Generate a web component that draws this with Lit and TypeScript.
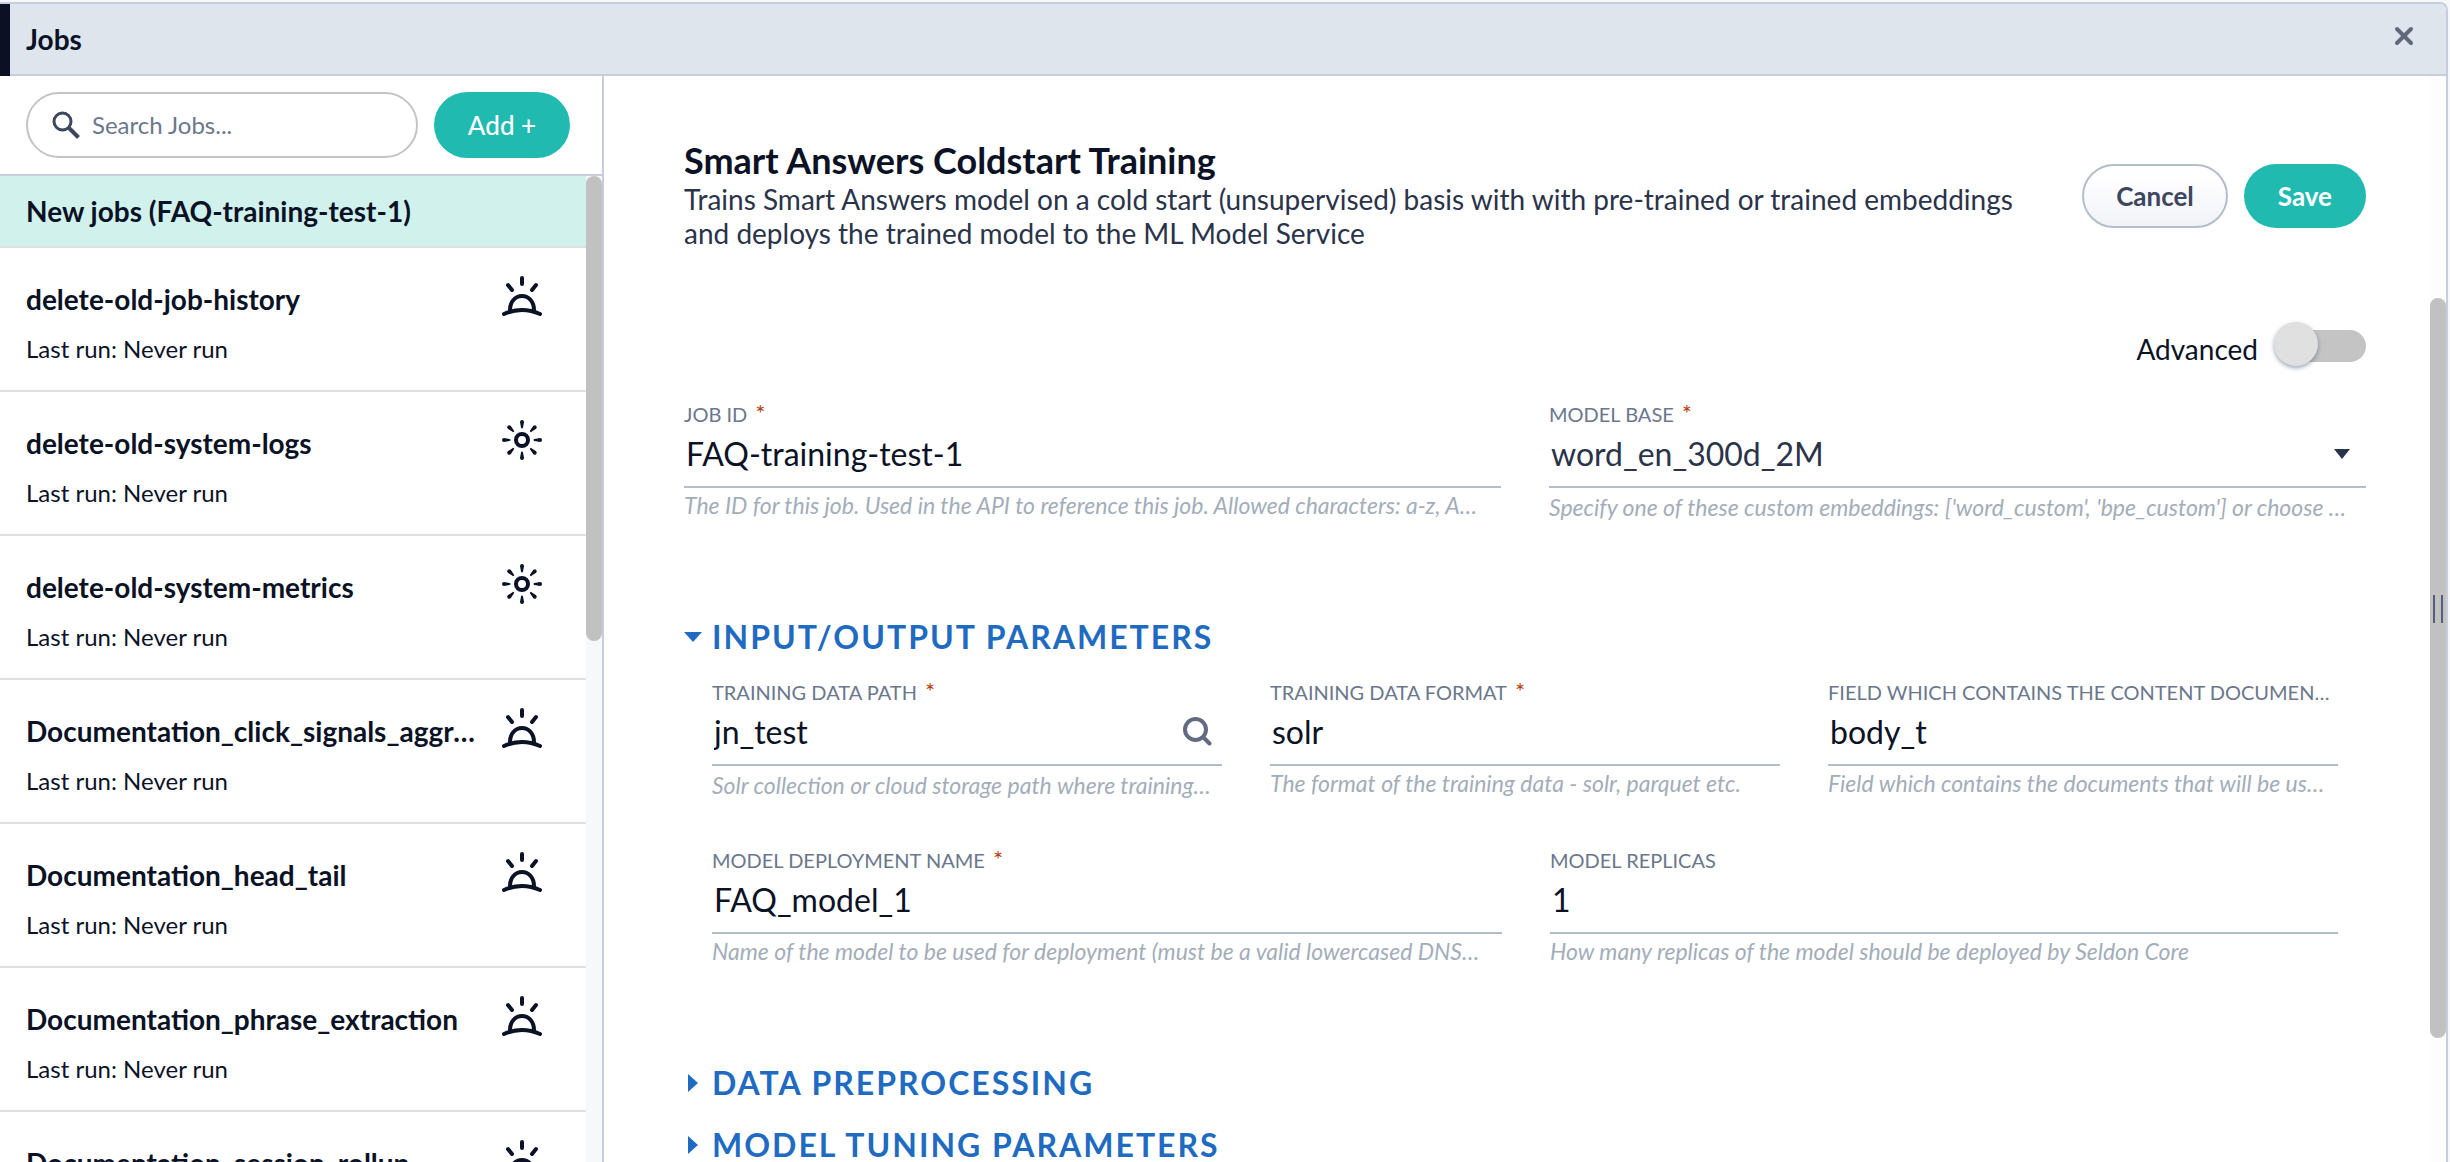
import { LitElement, html, css, svg, nothing } from "lit";
import { customElement, property, state } from "lit/decorators.js";
import { classMap } from "lit/directives/class-map.js";

type Schedule = "sunrise" | "sun";

interface Job {
  name: string;
  schedule: Schedule;
}

const JOBS: Job[] = [
  { name: "delete-old-job-history", schedule: "sunrise" },
  { name: "delete-old-system-logs", schedule: "sun" },
  { name: "delete-old-system-metrics", schedule: "sun" },
  { name: "Documentation_click_signals_aggregation", schedule: "sunrise" },
  { name: "Documentation_head_tail", schedule: "sunrise" },
  { name: "Documentation_phrase_extraction", schedule: "sunrise" },
  { name: "Documentation_session_rollup", schedule: "sunrise" },
];

/* Scheduled job: a sun over the horizon. */
const sunriseIcon = svg`
  <g fill="none" stroke="currentColor" stroke-width="4" stroke-linecap="round" stroke-linejoin="round">
    <path d="M20 2v6M6 9l4 5M34 9l-4 5"></path>
    <path d="M2 38Q20 30 38 38"></path>
    <path d="M8 34C8 26 13 20 20 20S32 26 32 34"></path>
  </g>`;

/* Unscheduled job: a full sun with eight tapering rays. */
const sunIcon = svg`
  <circle cx="20" cy="20" r="6" fill="none" stroke="currentColor" stroke-width="4"></circle>
  ${[0, 45, 90, 135, 180, 225, 270, 315].map(
    (angle) => svg`<path fill="currentColor" transform="rotate(${angle} 20 20)"
      d="M18 2a2 2 0 0 1 4 0L21 7.500a1 1 0 0 1-2 0z"></path>`,
  )}`;

@customElement("job-list")
class JobList extends LitElement {
  static styles = css`
    :host {
      display: flex;
      flex-direction: column;
      min-height: 0;
      border-right: 2px solid #c8ccdb;
      background: #fff;
    }
    .tools {
      display: flex;
      gap: 16px;
      padding: 16px 32px 16px 26px;
      border-bottom: 2px solid #c6cddb;
    }
    .search {
      display: flex;
      flex: 1;
      align-items: center;
      gap: 12px;
      min-width: 0;
      height: 66px;
      box-sizing: border-box;
      padding: 0 24px;
      border: 2px solid #c4c4c6;
      border-radius: 33px;
    }
    .search svg {
      flex: none;
      width: 28px;
      height: 28px;
      color: #3d465c;
    }
    .search input {
      flex: 1;
      min-width: 0;
      padding: 0;
      border: 0;
      outline: 0;
      background: none;
      font: 24px/30px Lato, sans-serif;
      color: #0b1226;
    }
    .search input::placeholder {
      color: #6b778c;
      opacity: 1;
    }
    .add {
      width: 136px;
      height: 66px;
      border: 0;
      border-radius: 33px;
      background: #21bab0;
      color: #fff;
      font: 500 26px/32px Lato, sans-serif;
    }
    .body {
      display: flex;
      flex: 1;
      min-height: 0;
      overflow: hidden;
    }
    .jobs {
      flex: 1;
      min-width: 0;
      margin: 0;
      padding: 0;
      list-style: none;
    }
    .job {
      border-bottom: 2px solid #dfdfdf;
    }
    .job.selected {
      background: #d1f1ec;
    }
    .link {
      display: flex;
      justify-content: space-between;
      align-items: flex-start;
      gap: 16px;
      padding: 28px 44px 26px 26px;
      color: #0b1226;
      text-decoration: none;
    }
    .selected .link {
      padding: 18px 26px;
    }
    .text {
      flex: 1;
      min-width: 0;
    }
    .name {
      display: block;
      overflow: hidden;
      white-space: nowrap;
      text-overflow: ellipsis;
      font-weight: 700;
      font-size: 28px;
      line-height: 34px;
    }
    .job:not(.selected) .name {
      padding-top: 6px;
    }
    .run {
      display: block;
      padding-top: 18px;
      font-size: 24px;
      line-height: 30px;
    }
    .schedule {
      flex: none;
      width: 40px;
      height: 40px;
    }
    .track {
      width: 16px;
      background: #f6f8fa;
    }
    .thumb {
      height: 47.2%;
      border-radius: 8px;
      background: #c1c1c1;
    }
  `;

  @property({ attribute: false }) jobs: Job[] = [];
  @property() draft = "";

  render() {
    return html`
      <div class="tools">
        <label class="search">
          <svg viewBox="0 0 28 28" aria-hidden="true">
            <circle cx="10.500" cy="10.500" r="8.500" fill="none" stroke="currentColor" stroke-width="3"></circle>
            <path d="M17 17l9.500 9.500" stroke="currentColor" stroke-width="4"></path>
          </svg>
          <input type="search" placeholder="Search Jobs..." aria-label="Search Jobs" />
        </label>
        <button class="add" type="button">Add +</button>
      </div>
      <div class="body">
        <ul class="jobs">
          <li class="job selected">
            <a class="link" href="#new"><span class="name">New jobs (${this.draft})</span></a>
          </li>
          ${this.jobs.map(
            (job) => html`
              <li class="job">
                <a class="link" href="#${job.name}">
                  <span class="text">
                    <span class="name">${job.name}</span>
                    <span class="run">Last run: Never run</span>
                  </span>
                  <svg class="schedule" viewBox="0 0 40 40" aria-hidden="true">
                    ${job.schedule === "sun" ? sunIcon : sunriseIcon}
                  </svg>
                </a>
              </li>
            `,
          )}
        </ul>
        <div class="track"><div class="thumb"></div></div>
      </div>
    `;
  }
}

@customElement("form-field")
class FormField extends LitElement {
  static styles = css`
    :host {
      display: block;
      min-width: 0;
    }
    .label {
      display: block;
      overflow: hidden;
      white-space: nowrap;
      text-overflow: ellipsis;
      padding-right: 8px;
      color: #6b778c;
      font-size: 20px;
      line-height: 24px;
      text-transform: uppercase;
    }
    .star {
      margin-left: 8px;
      color: #b8400e;
      font-size: 24px;
      line-height: 20px;
    }
    .control {
      display: flex;
      align-items: center;
      box-sizing: border-box;
      height: 62px;
      padding: 0 0 4px 2px;
      border-bottom: 2px solid #b4bdcc;
    }
    .value {
      flex: 1;
      min-width: 0;
      height: 40px;
      padding: 0;
      border: 0;
      outline: 0;
      background: none;
      appearance: none;
      color: #0b1226;
      font: 32px/40px Lato, sans-serif;
    }
    select.value {
      color: #2a3349;
    }
    .arrow {
      width: 16px;
      height: 10px;
      margin-right: 16px;
      color: #2a3349;
      pointer-events: none;
    }
    .browse {
      display: flex;
      margin: 0 10px 0 0;
      padding: 0 0 2px;
      border: 0;
      background: none;
      color: #626b7f;
    }
    .browse svg {
      width: 30px;
      height: 30px;
    }
    .hint {
      overflow: hidden;
      margin: 0;
      padding: 4px 0 0;
      white-space: nowrap;
      text-overflow: ellipsis;
      color: #a3adba;
      font-size: 23px;
      line-height: 26px;
      font-style: italic;
    }
    .hint.low {
      padding-top: 6px;
    }
  `;

  @property() label = "";
  @property() value = "";
  @property() hint = "";
  @property() kind: "text" | "select" | "browse" = "text";
  @property({ type: Boolean }) required = false;

  private control() {
    if (this.kind === "select") {
      return html`
        <select class="value" id="value">
          <option selected>${this.value}</option>
        </select>
        <svg class="arrow" viewBox="0 0 16 10" aria-hidden="true"><path d="M0 0h16L8 10z" fill="currentColor"></path></svg>
      `;
    }
    return html`
      <input class="value" id="value" type="text" .value=${this.value} ?required=${this.required} />
      ${this.kind === "browse"
        ? html`<button class="browse" type="button" aria-label="Browse">
            <svg viewBox="0 0 30 30" aria-hidden="true">
              <g fill="none" stroke="currentColor" stroke-width="4" stroke-linecap="round">
                <circle cx="13.500" cy="13.500" r="10.500"></circle>
                <path d="M21.500 21.500l6 6"></path>
              </g>
            </svg>
          </button>`
        : nothing}
    `;
  }

  render() {
    return html`
      <label class="label" for="value"
        >${this.label}${this.required ? html`<span class="star">*</span>` : nothing}</label
      >
      <div class="control">${this.control()}</div>
      <p class=${classMap({ hint: true, low: this.kind !== "text" })}>${this.hint}</p>
    `;
  }
}

@customElement("form-section")
class FormSection extends LitElement {
  static styles = css`
    :host {
      display: block;
    }
    .title {
      margin: 0;
      font-size: 32px;
      line-height: 38px;
    }
    .toggle {
      display: flex;
      align-items: center;
      padding: 0;
      border: 0;
      background: none;
      color: #1f6bc1;
      font: 700 32px/38px Lato, sans-serif;
      letter-spacing: 2px;
      text-transform: uppercase;
    }
    .marker {
      display: flex;
      justify-content: center;
      width: 18px;
      margin-right: 10px;
    }
    .content {
      padding: 24px 28px 74px;
    }
  `;

  @property() heading = "";
  @property({ type: Boolean }) open = false;

  render() {
    return html`
      <h2 class="title">
        <button class="toggle" type="button" aria-expanded=${this.open} @click=${() => (this.open = !this.open)}>
          <span class="marker">
            ${this.open
              ? html`<svg width="18" height="10" viewBox="0 0 18 10"><path d="M0 0h18L9 10z" fill="currentColor"></path></svg>`
              : html`<svg width="10" height="18" viewBox="0 0 10 18"><path d="M0 0l10 9-10 9z" fill="currentColor"></path></svg>`}
          </span>
          ${this.heading}
        </button>
      </h2>
      ${this.open ? html`<div class="content"><slot></slot></div>` : nothing}
    `;
  }
}

@customElement("app-root")
class AppRoot extends LitElement {
  static styles = css`
    :host {
      display: block;
      box-sizing: border-box;
      height: 100vh;
      padding: 2px 2px 0 0;
      overflow: hidden;
      background: #f6f8fb;
      color: #0b1226;
      font-family: Lato, sans-serif;
    }
    .window {
      position: relative;
      display: flex;
      flex-direction: column;
      box-sizing: border-box;
      height: 100%;
      overflow: hidden;
      border: solid #c6cddb;
      border-width: 2px 2px 0 0;
      border-radius: 0 8px 0 0;
      background: #fff;
    }
    .frame {
      display: flex;
      flex: none;
      border-left: 10px solid #0b1024;
    }
    .bar {
      display: flex;
      flex: 1;
      justify-content: space-between;
      align-items: center;
      height: 70px;
      padding: 0 32px 0 16px;
      border-bottom: 2px solid #c6cddb;
      background: #dee5ed;
    }
    .heading {
      margin: 0;
      font-size: 28px;
      line-height: 34px;
      font-weight: 700;
    }
    .close {
      display: flex;
      padding: 0 0 6px;
      border: 0;
      background: none;
      color: #5f687c;
    }
    .split {
      display: grid;
      grid-template-columns: 604px minmax(0, 1fr);
      grid-template-rows: minmax(0, 1fr);
      flex: 1;
      min-height: 0;
    }
    .pane {
      display: flex;
      min-width: 0;
      overflow: hidden;
    }
    .form {
      flex: 1;
      min-width: 0;
      padding: 62px 64px 0 80px;
    }
    .intro {
      display: flex;
      justify-content: space-between;
      align-items: center;
      gap: 48px;
    }
    .title {
      margin: 0;
      font-size: 36px;
      line-height: 44px;
      font-weight: 700;
    }
    .about {
      margin: 0;
      color: #2a3349;
      font-size: 28px;
      line-height: 34px;
    }
    .actions {
      display: flex;
      flex: none;
      gap: 16px;
      padding-top: 4px;
    }
    .action {
      box-sizing: border-box;
      height: 64px;
      padding: 0 34px;
      border: 0;
      border-radius: 32px;
      background: #21bab0;
      color: #fff;
      font: 700 26px/32px Lato, sans-serif;
    }
    .action.plain {
      padding: 0 32px;
      border: 2px solid #b4bdcc;
      background: linear-gradient(#fff 20%, #f0f2f7);
      color: #3d465c;
    }
    .advanced {
      display: flex;
      justify-content: flex-end;
      align-items: flex-end;
      gap: 16px;
      margin-top: 72px;
      font-size: 28px;
      line-height: 34px;
    }
    .switch {
      position: relative;
      display: flex;
      align-items: center;
      width: 92px;
      height: 44px;
      margin: 0;
      appearance: none;
    }
    .switch::before {
      content: "";
      position: absolute;
      inset: 8px 0 4px 8px;
      border-radius: 16px;
      background: #c4c4c4;
    }
    .switch::after {
      content: "";
      position: relative;
      width: 44px;
      height: 44px;
      border-radius: 50%;
      background: #e0e0e0;
      box-shadow: 0 2px 4px rgb(40 60 90 / 45%);
    }
    .switch:checked::after {
      margin-left: auto;
    }
    .row {
      display: grid;
      grid-auto-flow: column;
      grid-auto-columns: minmax(0, 1fr);
      gap: 48px;
    }
    .general {
      margin: 36px 0 98px;
    }
    .uneven {
      grid-template-columns: minmax(0, 790fr) minmax(0, 788fr);
    }
    .fields {
      display: grid;
      gap: 50px;
    }
    .sections {
      display: grid;
      gap: 24px;
    }
    .sections > :first-child {
      padding-bottom: 2px;
    }
    .track {
      width: 16px;
      background: #fdfdfe;
    }
    .thumb {
      height: 740px;
      margin-top: 222px;
      border-radius: 8px;
      background: #c1c1c1;
    }
    .grip {
      position: absolute;
      top: 51%;
      right: 3px;
      width: 6px;
      height: 28px;
      border: solid #555d78;
      border-width: 0 2px;
    }
  `;

  @state() private jobId = "FAQ-training-test-1";

  render() {
    return html`
      <div class="window">
        <header class="frame">
          <div class="bar">
            <h1 class="heading">Jobs</h1>
            <button class="close" type="button" aria-label="Close">
              <svg width="20" height="20" viewBox="0 0 20 20" aria-hidden="true">
                <path d="M3 3l14 14M17 3L3 17" fill="none" stroke="currentColor" stroke-width="4" stroke-linecap="round"></path>
              </svg>
            </button>
          </div>
        </header>
        <div class="split">
          <job-list .jobs=${JOBS} draft=${this.jobId}></job-list>
          <main class="pane">
            <form class="form" @submit=${(e: Event) => e.preventDefault()}>
              <div class="intro">
                <div>
                  <h2 class="title">Smart Answers Coldstart Training</h2>
                  <p class="about">
                    Trains Smart Answers model on a cold start (unsupervised) basis with with pre-trained or trained
                    embeddings and deploys the trained model to the ML Model Service
                  </p>
                </div>
                <div class="actions">
                  <button class="action plain" type="button">Cancel</button>
                  <button class="action" type="submit">Save</button>
                </div>
              </div>
              <div class="advanced">
                <label for="advanced">Advanced</label>
                <input class="switch" id="advanced" type="checkbox" role="switch" />
              </div>
              <div class="row general">
                <form-field
                  label="Job ID"
                  required
                  value=${this.jobId}
                  hint="The ID for this job. Used in the API to reference this job. Allowed characters: a-z, A…"
                ></form-field>
                <form-field
                  label="Model base"
                  required
                  kind="select"
                  value="word_en_300d_2M"
                  hint="Specify one of these custom embeddings: ['word_custom', 'bpe_custom'] or choose …"
                ></form-field>
              </div>
              <div class="sections">
                <form-section heading="Input/Output Parameters" open>
                  <div class="fields">
                    <div class="row">
                      <form-field
                        label="Training data path"
                        required
                        kind="browse"
                        value="jn_test"
                        hint="Solr collection or cloud storage path where training…"
                      ></form-field>
                      <form-field
                        label="Training data format"
                        required
                        value="solr"
                        hint="The format of the training data - solr, parquet etc."
                      ></form-field>
                      <form-field
                        label="Field which contains the content documents"
                        value="body_t"
                        hint="Field which contains the documents that will be us…"
                      ></form-field>
                    </div>
                    <div class="row uneven">
                      <form-field
                        label="Model deployment name"
                        required
                        value="FAQ_model_1"
                        hint="Name of the model to be used for deployment (must be a valid lowercased DNS…"
                      ></form-field>
                      <form-field
                        label="Model replicas"
                        value="1"
                        hint="How many replicas of the model should be deployed by Seldon Core"
                      ></form-field>
                    </div>
                  </div>
                </form-section>
                <form-section heading="Data preprocessing"></form-section>
                <form-section heading="Model tuning parameters"></form-section>
              </div>
            </form>
            <div class="track"><div class="thumb"></div></div>
          </main>
        </div>
        <div class="grip"></div>
      </div>
    `;
  }
}
